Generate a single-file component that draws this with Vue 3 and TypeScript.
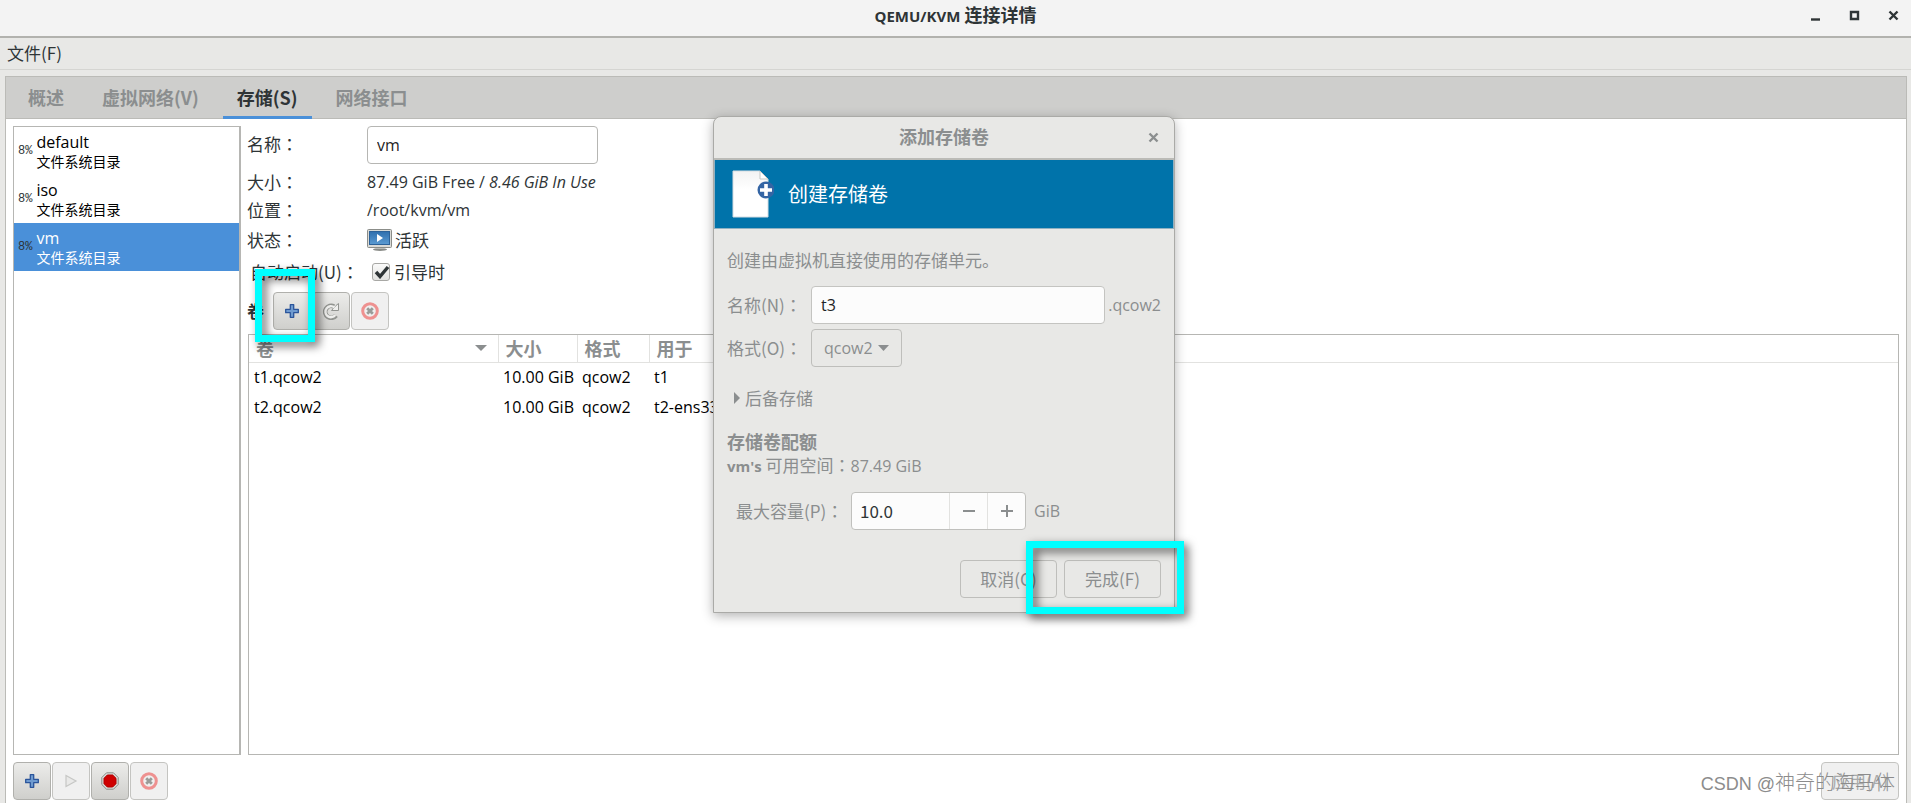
<script setup lang="ts">
import { ref } from 'vue'

interface Pool {
  name: string
  kind: string
  usage: string
}

interface Volume {
  name: string
  size: string
  format: string
  usedBy: string
}

const tabs = ['概述', '虚拟网络(V)', '存储(S)', '网络接口']
const activeTab = ref(2)

const pools: Pool[] = [
  { name: 'default', kind: '文件系统目录', usage: '8%' },
  { name: 'iso', kind: '文件系统目录', usage: '8%' },
  { name: 'vm', kind: '文件系统目录', usage: '8%' },
]
const activePool = ref(2)

const volumes: Volume[] = [
  { name: 't1.qcow2', size: '10.00 GiB', format: 'qcow2', usedBy: 't1' },
  { name: 't2.qcow2', size: '10.00 GiB', format: 'qcow2', usedBy: 't2-ens33' },
]

const poolName = ref('vm')
const autostart = ref(true)
const volumeName = ref('t3')
const volumeFormat = ref('qcow2')
const capacity = ref('10.0')

function step(delta: number) {
  capacity.value = Math.max(0, Number(capacity.value) + delta).toFixed(1)
}
</script>

<template>
  <div class="window">
    <header class="titlebar">
      <h1><span class="latin">QEMU/KVM</span> 连接详情</h1>
      <div class="window-buttons">
        <button type="button" aria-label="最小化">
          <svg width="11" height="11" viewBox="0 0 11 11"><path d="M1 9.5h9" stroke="#2e3436" stroke-width="2.4" /></svg>
        </button>
        <button type="button" aria-label="最大化">
          <svg width="11" height="11" viewBox="0 0 11 11"><path d="M2 2h7v7H2z" fill="none" stroke="#2e3436" stroke-width="2.4" /></svg>
        </button>
        <button type="button" aria-label="关闭">
          <svg width="11" height="11" viewBox="0 0 11 11"><path d="M1.5 1.5l8 8M9.500 1.500l-8 8" stroke="#2e3436" stroke-width="2.4" /></svg>
        </button>
      </div>
    </header>

    <nav class="menubar"><button type="button">文件(F)</button></nav>

    <main class="notebook">
      <div class="tabs" role="tablist">
        <button
          v-for="(tab, i) in tabs"
          :key="tab"
          type="button"
          role="tab"
          class="tab"
          :class="{ active: i === activeTab }"
          :aria-selected="i === activeTab"
          @click="activeTab = i"
        >{{ tab }}</button>
      </div>

      <div class="page">
        <div class="panes">
          <ul class="pools">
            <li v-for="(pool, i) in pools" :key="pool.name">
              <button type="button" class="pool" :class="{ selected: i === activePool }" @click="activePool = i">
                <span class="usage">{{ pool.usage }}</span>
                <span class="pool-text">
                  <span class="pool-name">{{ pool.name }}</span>
                  <span class="pool-kind">{{ pool.kind }}</span>
                </span>
              </button>
            </li>
          </ul>

          <section class="details">
            <div class="form">
              <label for="pool-name" class="row-name">名称<span class="colon">：</span></label>
              <div><input id="pool-name" v-model="poolName" class="entry" type="text" /></div>
              <span>大小<span class="colon">：</span></span>
              <span class="value">87.49 GiB Free / <em>8.46 GiB In Use</em></span>
              <span>位置<span class="colon">：</span></span>
              <span class="value">/root/kvm/vm</span>
              <span>状态<span class="colon">：</span></span>
              <span class="state">
                <svg width="26" height="23" viewBox="0 0 26 23">
                  <defs>
                    <linearGradient id="screen" x1="0" y1="0" x2="0" y2="1">
                      <stop offset="0" stop-color="#2f6fae" />
                      <stop offset="1" stop-color="#5b9bd2" />
                    </linearGradient>
                  </defs>
                  <ellipse cx="13" cy="20.500" rx="7" ry="1.500" fill="#8b8d89" />
                  <path d="M9 18h8v2H9z" fill="#b9bbb7" />
                  <rect x=".5" y=".5" width="24" height="18" rx="1" fill="#d9dad7" stroke="#8b8d89" />
                  <rect x="2.500" y="2.500" width="20" height="13" fill="url(#screen)" stroke="#2c6299" />
                  <path d="M10 5v8l6-4z" fill="#fff" />
                </svg>
                活跃
              </span>
              <label for="autostart" class="auto-label">自动启动(U)<span class="colon">：</span></label>
              <label class="check">
                <input id="autostart" v-model="autostart" type="checkbox" />
                <svg class="tick" width="16" height="14" viewBox="0 0 16 14"><path d="M2 7l4 4.500L14 2" fill="none" stroke="#2e3436" stroke-width="3.400" /></svg>
                引导时
              </label>
            </div>

            <div class="toolbar">
              <b>卷</b>
              <button type="button" class="tool" aria-label="新建卷">
                <svg width="16" height="16" viewBox="0 0 16 16"><path d="M6.300 1.700h3.400v4.600h4.600v3.400H9.700v4.600H6.300V9.700H1.700V6.300h4.600z" fill="#6f9bd0" stroke="#2b559b" stroke-width="1.300" stroke-linejoin="round" /></svg>
              </button>
              <button type="button" class="tool" aria-label="刷新">
                <svg width="18" height="18" viewBox="0 0 18 18">
                  <path d="M14 13.500A6 6 0 1 1 12 4.500" fill="none" stroke="#929490" stroke-width="4.600" />
                  <path d="M9.500 8.500h7V1.500l-2.500 2z" fill="#efefed" stroke="#929490" stroke-linejoin="round" />
                  <path d="M13.300 13A5.500 5.500 0 1 1 12.500 5.500" fill="none" stroke="#efefed" stroke-width="2.400" />
                </svg>
              </button>
              <button type="button" class="tool" aria-label="删除卷" disabled>
                <svg width="18" height="18" viewBox="0 0 18 18"><circle cx="9" cy="9" r="7.300" fill="#efefef" stroke="#ee9190" stroke-width="3" /><path d="M6.200 6.200l5.600 5.600M11.800 6.200l-5.600 5.600" stroke="#999b98" stroke-width="2.800" /></svg>
              </button>
            </div>

            <div class="volumes">
              <table>
                <colgroup><col class="c-name" /><col class="c-size" /><col class="c-format" /><col /></colgroup>
                <thead>
                  <tr>
                    <th scope="col">
                      <span class="sorted">卷 <svg width="12" height="6" viewBox="0 0 12 6"><path d="M0 0h12L6 6z" fill="#8b8e8f" /></svg></span>
                    </th>
                    <th scope="col">大小</th>
                    <th scope="col">格式</th>
                    <th scope="col">用于</th>
                  </tr>
                </thead>
                <tbody>
                  <tr v-for="volume in volumes" :key="volume.name">
                    <td>{{ volume.name }}</td>
                    <td>{{ volume.size }}</td>
                    <td>{{ volume.format }}</td>
                    <td>{{ volume.usedBy }}</td>
                  </tr>
                </tbody>
              </table>
            </div>
          </section>
        </div>

        <footer class="actions">
          <button type="button" class="tool" aria-label="添加池">
            <svg width="16" height="16" viewBox="0 0 16 16"><path d="M6.300 1.700h3.400v4.600h4.600v3.400H9.700v4.600H6.300V9.700H1.700V6.300h4.600z" fill="#6f9bd0" stroke="#2b559b" stroke-width="1.300" stroke-linejoin="round" /></svg>
          </button>
          <button type="button" class="tool" aria-label="启动池" disabled>
            <svg width="14" height="14" viewBox="0 0 14 14"><path d="M2 1.500v11L12 7z" fill="#e9e9e8" stroke="#c6c7c5" stroke-width="1.200" /></svg>
          </button>
          <button type="button" class="tool" aria-label="停止池">
            <svg width="18" height="18" viewBox="0 0 18 18"><path d="M5.500 .8h7l4.700 4.700v7l-4.700 4.700h-7L.8 12.500v-7z" fill="#dadbd8" stroke="#8b8d89" /><path d="M6.300 3h5.400L15 6.300v5.400L11.700 15H6.300L3 11.700V6.300z" fill="#cf0000" stroke="#b00000" /></svg>
          </button>
          <button type="button" class="tool" aria-label="删除池" disabled>
            <svg width="18" height="18" viewBox="0 0 18 18"><circle cx="9" cy="9" r="7.300" fill="#efefef" stroke="#ee9190" stroke-width="3" /><path d="M6.200 6.200l5.600 5.600M11.800 6.200l-5.600 5.600" stroke="#999b98" stroke-width="2.800" /></svg>
          </button>
          <button type="button" class="apply" disabled>应用(A)</button>
        </footer>
      </div>
    </main>

    <form class="dialog" role="dialog" aria-labelledby="dialog-title" @submit.prevent>
      <div class="dialog-bar">
        <h2 id="dialog-title">添加存储卷</h2>
        <button type="button" class="dialog-close" aria-label="关闭">
          <svg width="11" height="11" viewBox="0 0 11 11"><path d="M1.500 1.500l8 8M9.500 1.500l-8 8" stroke="#8b8e8f" stroke-width="2.400" /></svg>
        </button>
      </div>
      <div class="banner">
        <svg width="42" height="50" viewBox="0 0 42 50">
          <defs>
            <linearGradient id="paper" x1="0" y1="0" x2="0" y2="1">
              <stop offset="0" stop-color="#f3f3f3" />
              <stop offset=".4" stop-color="#fff" />
            </linearGradient>
          </defs>
          <path d="M1 2h27l8 8v38H1z" fill="url(#paper)" stroke="#d5dde2" />
          <path d="M28 2v8h8z" fill="#fff" stroke="#c5c7c5" />
          <circle cx="34" cy="21" r="8.500" fill="#3465a4" />
          <path d="M34 15v12M28 21h12" stroke="#fff" stroke-width="3.600" />
        </svg>
        <h3>创建存储卷</h3>
      </div>
      <div class="dialog-body">
        <p class="intro">创建由虚拟机直接使用的存储单元。</p>
        <div class="field">
          <label for="volume-name">名称(N)<span class="colon">：</span></label>
          <input id="volume-name" v-model="volumeName" class="entry grow" type="text" />
          <span class="suffix">.qcow2</span>
        </div>
        <div class="field">
          <label for="volume-format">格式(O)<span class="colon">：</span></label>
          <div class="combo">
            <select id="volume-format" v-model="volumeFormat">
              <option>qcow2</option>
              <option>raw</option>
            </select>
            <svg width="11" height="6" viewBox="0 0 11 6"><path d="M0 0h11L5.500 6z" fill="#8b8e8f" /></svg>
          </div>
        </div>
        <button type="button" class="expander">
          <svg width="6" height="12" viewBox="0 0 6 12"><path d="M0 0v12l6-6z" fill="#8b8e8f" /></svg>
          后备存储
        </button>
        <h4>存储卷配额</h4>
        <p class="quota"><b>vm's</b> 可用空间<span class="colon">：</span><span class="value">87.49 GiB</span></p>
        <div class="field capacity">
          <label for="capacity">最大容量(P)<span class="colon">：</span></label>
          <div class="spin">
            <input id="capacity" v-model="capacity" type="text" />
            <button type="button" aria-label="减少" @click="step(-1)">
              <svg width="12" height="12" viewBox="0 0 12 12"><path d="M0 6h12" stroke="#8b8e8f" stroke-width="2" /></svg>
            </button>
            <button type="button" aria-label="增加" @click="step(1)">
              <svg width="12" height="12" viewBox="0 0 12 12"><path d="M0 6h12M6 0v12" stroke="#8b8e8f" stroke-width="2" /></svg>
            </button>
          </div>
          <span class="suffix unit">GiB</span>
        </div>
        <div class="dialog-actions">
          <button type="button">取消(C)</button>
          <button type="submit">完成(F)</button>
        </div>
      </div>
    </form>

    <div class="marker marker-add"></div>
    <div class="marker marker-finish"></div>
    <div class="watermark"><span class="latin">CSDN @</span>神奇的海马体</div>
  </div>
</template>

<style>
body {
  margin: 0;
  background: #e8e8e6;
}
</style>

<style scoped>
* {
  box-sizing: border-box;
}
.window {
  position: relative;
  display: flex;
  flex-direction: column;
  height: 100vh;
  overflow: hidden;
  background: #e8e8e6;
  color: #2e3436;
  font: 17px/24px "Noto Sans CJK SC", sans-serif;
}
h1, h2, h3, h4, p, ul {
  margin: 0;
  padding: 0;
}
button, input, select {
  margin: 0;
  color: inherit;
  font: inherit;
}
button {
  padding: 0;
  border: 0;
  background: none;
}
svg {
  display: block;
  flex: none;
}
.colon {
  font-family: "Noto Sans CJK TC", sans-serif;
}
.titlebar {
  position: relative;
  display: flex;
  flex: none;
  align-items: center;
  justify-content: center;
  height: 38px;
  padding-bottom: 6px;
  border-bottom: 2px solid #b2b2ae;
  background: #f3f3f3;
}
.titlebar h1 {
  font-size: 18px;
  font-weight: 700;
  line-height: 24px;
}
.titlebar .latin {
  font-family: "Open Sans", sans-serif;
  font-size: 15px;
}
.window-buttons {
  position: absolute;
  top: 10px;
  right: 12px;
  display: flex;
  gap: 28px;
}
.menubar {
  flex: none;
  height: 32px;
  padding: 3px 7px;
  border-bottom: 1px solid #d5d5d2;
}
.notebook {
  display: flex;
  flex: 1;
  flex-direction: column;
  min-height: 0;
  margin: 6px 4px 0 5px;
  border: 1px solid #bbbbb7;
  border-bottom: 0;
  background: #fff;
}
.tabs {
  display: flex;
  flex: none;
  gap: 10px;
  height: 42px;
  padding-left: 8px;
  border-bottom: 1px solid #bbbbb7;
  background: #cececc;
}
.tab {
  height: 42px;
  padding: 0 14px;
  border-bottom: 3px solid transparent;
  color: #8b8e8f;
  font-size: 18px;
  font-weight: 700;
}
.tab.active {
  border-color: #4a90d9;
  color: #2e3436;
}
.page {
  display: flex;
  flex: 1;
  flex-direction: column;
  min-height: 0;
  padding: 7px 7px 3px;
}
.panes {
  display: flex;
  flex: 1;
  gap: 6px;
  min-height: 0;
}
.pools {
  flex: none;
  width: 228px;
  border: 1px solid #b6b6b3;
  border-right-width: 2px;
  list-style: none;
}
.pool {
  display: flex;
  align-items: center;
  gap: 4px;
  width: 100%;
  height: 48px;
  padding-left: 4px;
  color: #000;
  text-align: left;
}
.pool.selected {
  background: #4a90d9;
  color: #fff;
}
.usage {
  color: #2e3436;
  font: 12px/16px "Liberation Mono", monospace;
}
.pool-text {
  display: flex;
  flex-direction: column;
}
.pool-name {
  font-family: "Open Sans", sans-serif;
  font-size: 16px;
  line-height: 20px;
}
.pool-kind {
  font-size: 14px;
  line-height: 18px;
}
.details {
  display: flex;
  flex: 1;
  flex-direction: column;
  min-width: 0;
}
.form {
  display: grid;
  grid-template-columns: 120px 1fr;
  grid-template-rows: 42px 28px 28px 32px 32px;
  align-items: center;
}
.row-name {
  padding-bottom: 6px;
}
.row-name + div {
  padding-bottom: 4px;
}
.auto-label {
  padding-left: 3px;
}
.value {
  font-family: "Open Sans", sans-serif;
  font-size: 16px;
}
.entry {
  display: block;
  width: 231px;
  height: 38px;
  padding: 0 9px;
  border: 1px solid #b6b6b3;
  border-radius: 4px;
  background: #fff;
  color: #1f2425;
  font-family: "Open Sans", sans-serif;
  font-size: 16px;
}
.state {
  display: flex;
  gap: 2px;
  align-items: center;
}
.check {
  position: relative;
  display: flex;
  gap: 4px;
  align-items: center;
  padding-left: 5px;
}
.check input {
  width: 18px;
  height: 18px;
  border: 1px solid #a8a8a5;
  border-radius: 3px;
  background: linear-gradient(#fafafa, #e2e2e0);
  appearance: none;
}
.tick {
  position: absolute;
  left: 7px;
  visibility: hidden;
}
.check input:checked + .tick {
  visibility: visible;
}
.toolbar {
  display: flex;
  gap: 1px;
  align-items: center;
  height: 46px;
}
.toolbar b {
  width: 25px;
}
.tool {
  display: flex;
  align-items: center;
  justify-content: center;
  width: 38px;
  height: 38px;
  border: 1px solid #b0b0ac;
  border-radius: 4px;
  background: linear-gradient(#ececea, #cfcfcc);
}
.tool:disabled, .apply {
  border-color: #c4c4c1;
  background: #f0f0f0;
}
.volumes {
  flex: 1;
  min-height: 0;
  margin-left: 1px;
  overflow: hidden;
  border: 1px solid #b6b6b3;
}
table {
  width: 100%;
  border-collapse: collapse;
  table-layout: fixed;
  color: #000;
  font-size: 16px;
}
.c-name {
  width: 249px;
}
.c-size {
  width: 79px;
}
.c-format {
  width: 72px;
}
th {
  height: 27px;
  padding: 0 7px;
  border-right: 1px solid #e2e2e0;
  border-bottom: 1px solid #e2e2e0;
  color: #8b8e8f;
  font-size: 18px;
  text-align: left;
}
th:last-child {
  border-right: 0;
}
.sorted {
  display: flex;
  align-items: center;
  justify-content: space-between;
  padding-right: 4px;
}
td {
  height: 30px;
  padding: 0 5px;
  font-family: "Open Sans", sans-serif;
  white-space: nowrap;
}
.actions {
  display: flex;
  flex: none;
  gap: 1px;
  margin-top: 7px;
}
.apply {
  width: 78px;
  height: 38px;
  margin-left: auto;
  border: 1px solid #c4c4c1;
  border-radius: 4px;
  color: #a9abac;
}
.dialog {
  position: absolute;
  top: 116px;
  left: 713px;
  width: 462px;
  border: 1px solid #aaaaa7;
  border-radius: 8px 8px 0 0;
  background: #e8e8e6;
  box-shadow: 0 3px 12px rgb(0 0 0 / 30%);
  color: #8b8e8f;
}
.dialog-bar {
  position: relative;
  display: flex;
  align-items: center;
  justify-content: center;
  height: 43px;
  padding-bottom: 4px;
  border-bottom: 2px solid #bbbbb7;
}
.dialog-bar h2 {
  font-size: 18px;
}
.dialog-close {
  position: absolute;
  top: 15px;
  right: 15px;
}
.banner {
  display: flex;
  gap: 14px;
  align-items: center;
  height: 69px;
  padding-left: 17px;
  border: 1px solid #8fb1c2;
  border-width: 0 1px 1px;
  background: #0073aa;
  color: #fff;
}
.banner h3 {
  font-size: 20px;
  font-weight: 400;
}
.dialog-body {
  display: flex;
  flex-direction: column;
  padding: 19px 13px 14px;
}
.intro {
  margin-bottom: 14px;
}
.field {
  display: flex;
  align-items: center;
  margin-bottom: 5px;
}
.field label {
  flex: none;
  width: 84px;
}
.grow {
  flex: 1;
  min-width: 0;
}
.dialog .entry {
  border-color: #c4c4c1;
  background: #fcfcfc;
}
.suffix {
  padding-left: 3px;
  font-family: "Open Sans", sans-serif;
  font-size: 16px;
}
.combo {
  position: relative;
  display: flex;
  align-items: center;
}
.combo select {
  width: 91px;
  height: 38px;
  padding: 0 12px;
  border: 1px solid #bebebb;
  border-radius: 4px;
  background: transparent;
  font-family: "Open Sans", sans-serif;
  font-size: 16px;
  appearance: none;
}
.combo svg {
  position: absolute;
  right: 13px;
  pointer-events: none;
}
.expander {
  display: flex;
  gap: 5px;
  align-items: center;
  margin: 14px 0 19px 7px;
}
h4 {
  font-size: 18px;
}
.quota {
  margin-bottom: 14px;
}
.quota b {
  font-family: "Open Sans", sans-serif;
  font-size: 15px;
}
.capacity label {
  width: 124px;
  padding-left: 9px;
}
.spin {
  display: flex;
  width: 175px;
  height: 38px;
  border: 1px solid #c0c0bd;
  border-radius: 4px;
  background: #fcfcfc;
}
.spin input {
  flex: 1;
  min-width: 0;
  padding: 0 8px;
  border: 0;
  background: none;
  color: #2e3436;
}
.spin button {
  display: flex;
  align-items: center;
  justify-content: center;
  width: 38px;
  border-left: 1px solid #e2e2e0;
}
.unit {
  padding-left: 8px;
}
.dialog-actions {
  display: flex;
  gap: 7px;
  justify-content: flex-end;
  margin-top: 25px;
}
.dialog-actions button {
  width: 97px;
  height: 38px;
  border: 1px solid #bebebb;
  border-radius: 4px;
}
.marker {
  position: absolute;
  height: 73px;
  border: 7px solid #00ffff;
  filter: drop-shadow(4px 4px 5px rgb(0 0 0 / 60%));
  pointer-events: none;
}
.marker-add {
  top: 269px;
  left: 255px;
  width: 60px;
}
.marker-finish {
  top: 541px;
  left: 1026px;
  width: 158px;
}
.watermark {
  position: absolute;
  right: 16px;
  bottom: 7px;
  color: #8c8c8c;
  font: 300 20px/24px "Noto Sans CJK SC", sans-serif;
}
.watermark .latin {
  font-family: "Liberation Sans", sans-serif;
  font-size: 18px;
}
</style>
